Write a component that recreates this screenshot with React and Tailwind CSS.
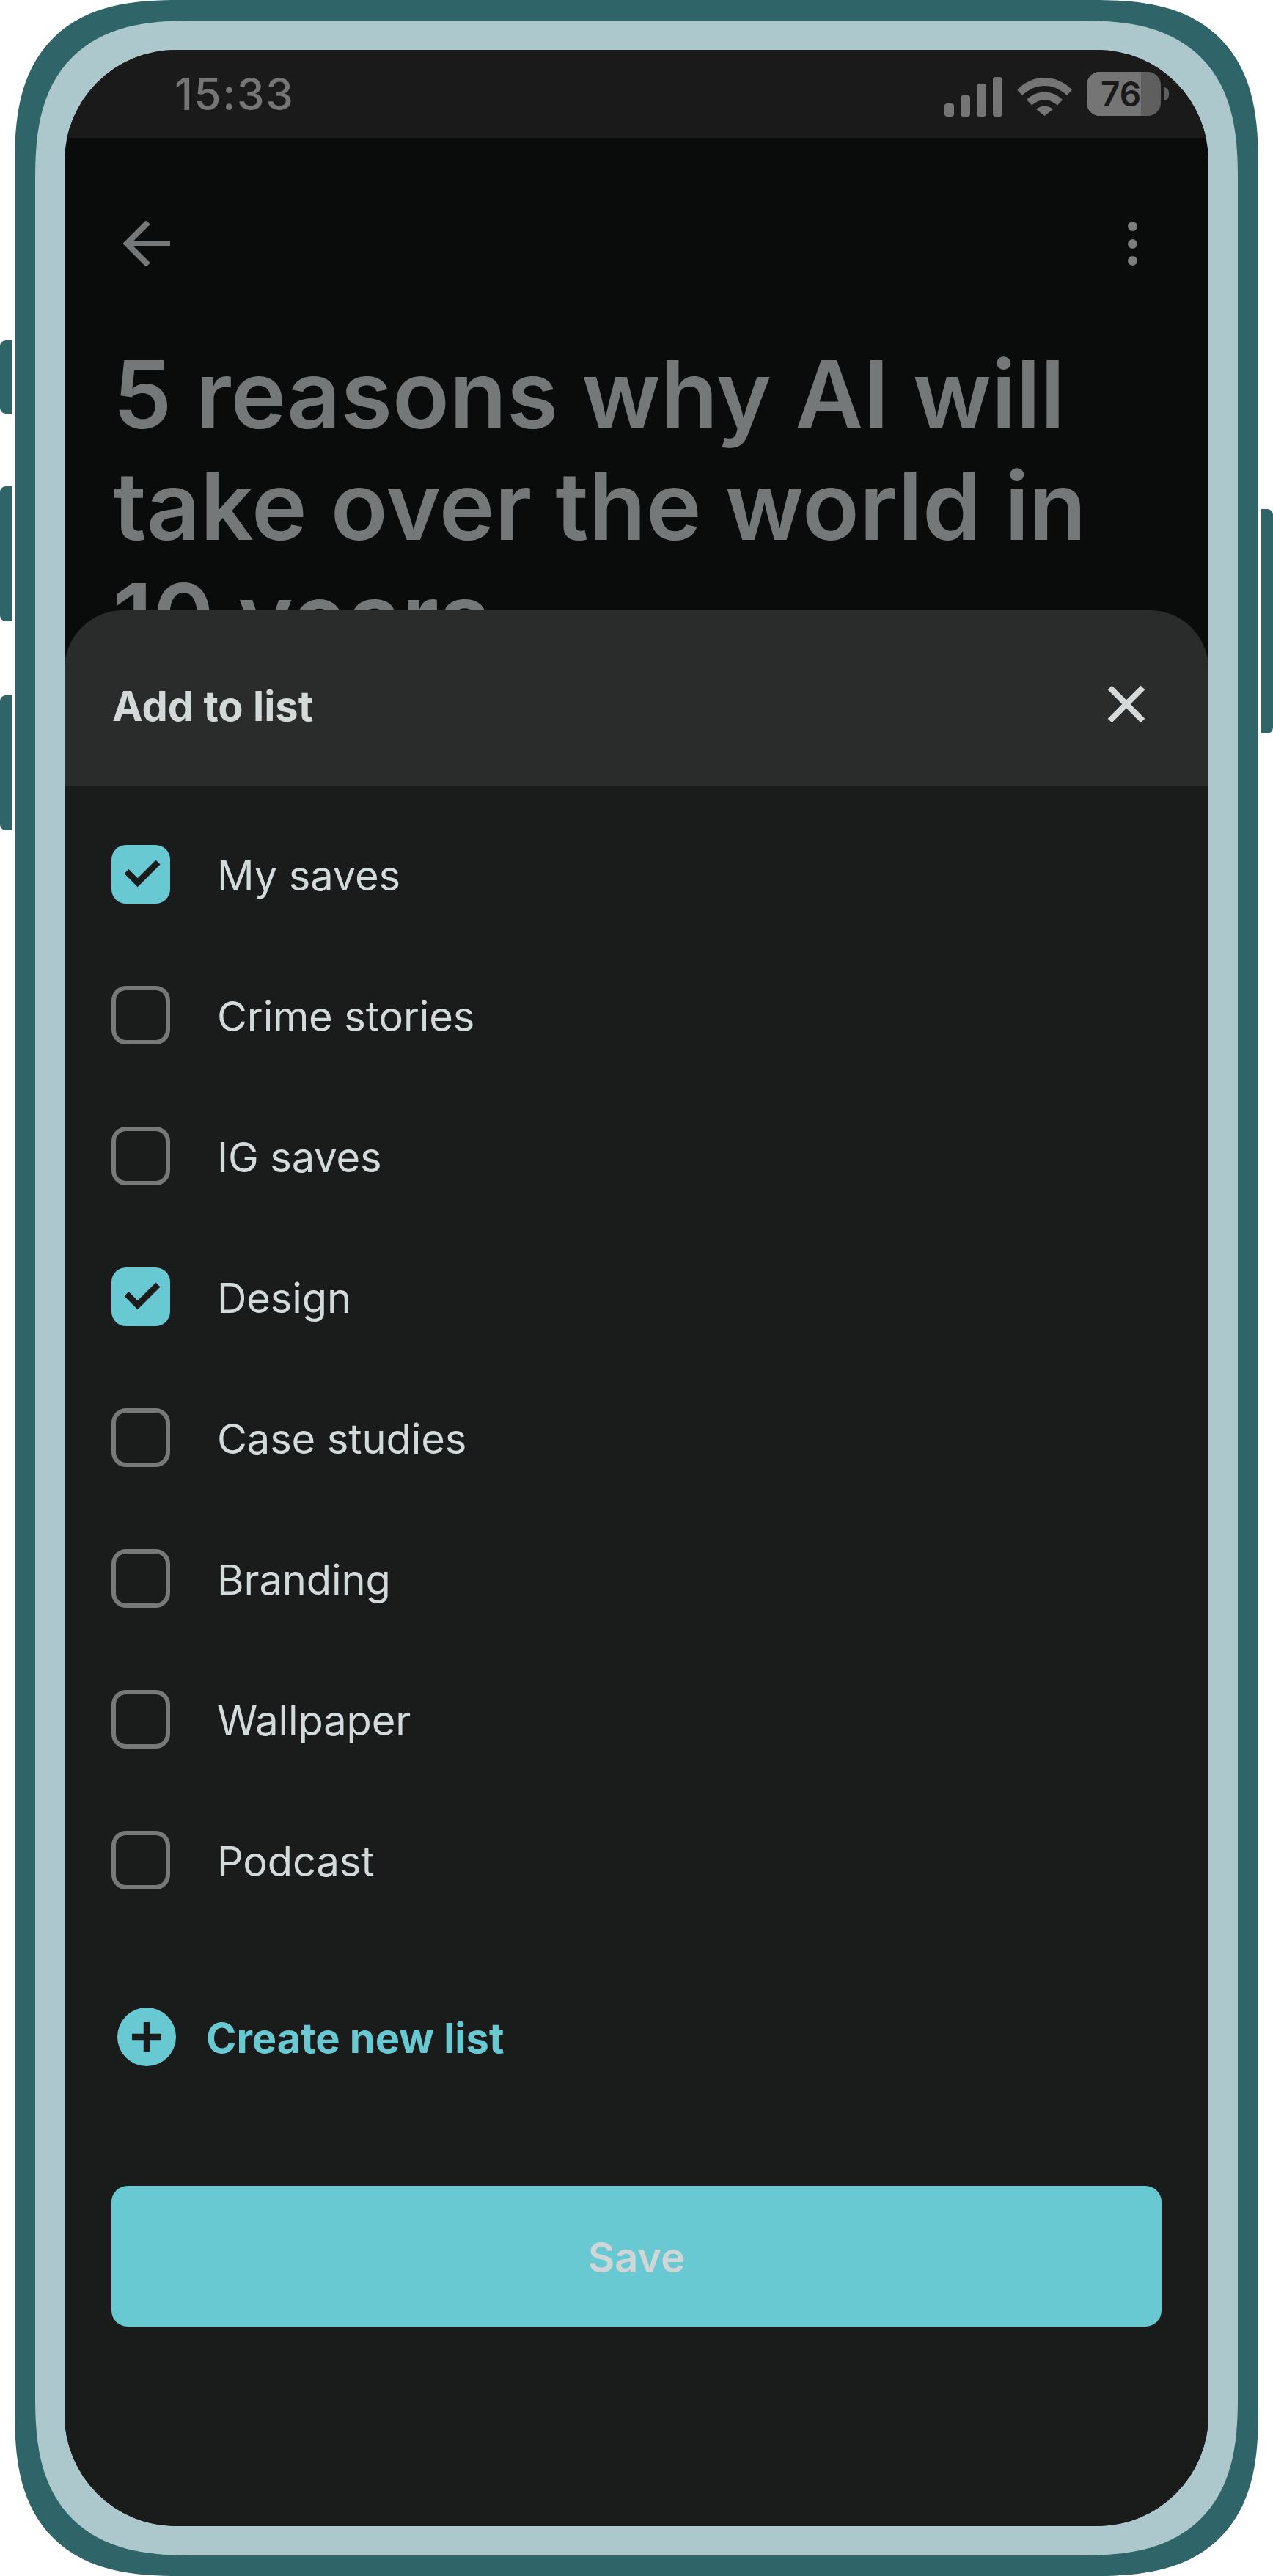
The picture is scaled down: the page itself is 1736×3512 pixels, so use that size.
const lists = [
  ["My saves", true],
  ["Crime stories", false],
  ["IG saves", false],
  ["Design", true],
  ["Case studies", false],
  ["Branding", false],
  ["Wallpaper", false],
  ["Podcast", false],
];

function Check({ label, checked }) {
  return (
    <div className="flex h-[192px] items-center gap-[64px]">
      {checked ? (
        <div className="h-[80px] w-[80px] shrink-0 rounded-[20px] bg-[#69c9d3]">
          <svg viewBox="0 0 80 80" className="h-[80px] w-[80px]" fill="none">
            <path d="M20.5 36 L35.7 51.3 L63.5 23.5" stroke="#1a1c1b" strokeWidth="8.5" />
          </svg>
        </div>
      ) : (
        <div className="h-[80px] w-[80px] shrink-0 rounded-[20px] border-[6px] border-[#757979]" />
      )}
      <span className="pt-[4px] text-[56px] leading-[80px] tracking-[-0.1px] text-[#d3dadc]">{label}</span>
    </div>
  );
}

function StatusIcons() {
  return (
    <div className="flex items-center">
      <svg width="80" height="54" viewBox="0 0 80 54" fill="#757575" className="mt-[7px]">
        <rect x="0" y="36" width="13" height="18" rx="4" />
        <rect x="22" y="25" width="13" height="29" rx="4" />
        <rect x="44" y="9" width="13" height="45" rx="4" />
        <rect x="66" y="0" width="13" height="54" rx="4" />
      </svg>
      <svg width="75" height="52" viewBox="0 0 75 52" fill="#757575" className="ml-[19px] mt-[7px]">
        <path d="M0 16.5 C21 -5.5 54 -5.5 75 16.5 L68 24 C50 6.5 25 6.5 7 24 Z" />
        <path d="M13 30 C27 16 48 16 62 30 L55 37.5 C43 27.5 32 27.5 20 37.5 Z" />
        <path d="M26 43 C33 37 42 37 49 43 L37.5 52 Z" />
      </svg>
      <div className="relative ml-[20px] flex h-[60px] w-[101px] items-center overflow-hidden rounded-[18px] bg-[#5f5f5f]">
        <div className="h-[60px] w-[74px] bg-[#757575]" />
        <span className="absolute left-[19px] top-0 text-[46px] font-semibold leading-[60px] text-[#1a1a1a]">76</span>
      </div>
      <div className="ml-[4px] h-[18px] w-[7px] rounded-r-[7px] bg-[#5f5f5f]" />
    </div>
  );
}

export default function App() {
  return (
    <div className="flex h-[3512px] w-[1736px] gap-[4px] overflow-hidden bg-white font-[Inter,sans-serif]">
      <div className="flex w-[16px] shrink-0 flex-col pt-[464px]">
        <div className="h-[100px] rounded-l-[8px] bg-[#2f6569]" />
        <div className="mt-[99px] h-[184px] rounded-l-[8px] bg-[#2f6569]" />
        <div className="mt-[101px] h-[184px] rounded-l-[8px] bg-[#2f6569]" />
      </div>

      <div className="h-[3512px] w-[1696px] shrink-0 rounded-[226px] bg-[#2f6569] p-[28px] [corner-shape:superellipse(1.4)]">
        <div className="h-full w-full rounded-[218px] bg-[#acc8cc] p-[40px] [corner-shape:superellipse(1.4)]">
          <div className="flex h-full w-full flex-col overflow-hidden rounded-[152px] bg-[#0a0c0b]">
            <div className="h-[764px] shrink-0 overflow-hidden">
              <div className="flex h-[120px] items-center justify-between bg-[#1a1a1a] pl-[150px] pr-[54px]">
                <span className="text-[60px] font-medium leading-[120px] tracking-[1.6px] text-[#757575]">15:33</span>
                <StatusIcons />
              </div>
              <div className="mt-[100px] flex h-[88px] items-center justify-between pl-[80px] pr-[97px]">
                <svg width="64" height="62" viewBox="0 0 64 62" fill="none" stroke="#747878" strokeWidth="8">
                  <path d="M64 31 H5 M34 2 L5 31 L34 60" />
                </svg>
                <div className="flex flex-col gap-[10.5px]">
                  <div className="h-[13px] w-[13px] rounded-full bg-[#7a7e7e]" />
                  <div className="h-[13px] w-[13px] rounded-full bg-[#7a7e7e]" />
                  <div className="h-[13px] w-[13px] rounded-full bg-[#7a7e7e]" />
                </div>
              </div>
              <h1 className="mt-[86px] pl-[66px] pr-[62px] text-[128px] font-semibold leading-[152px] tracking-[-0.1px] text-[#747878]">
                5 reasons why AI will take over the world in 10 years
              </h1>
            </div>

            <div className="flex min-h-0 flex-1 flex-col overflow-hidden rounded-t-[80px] bg-[#1a1c1b]">
              <div className="flex h-[240px] shrink-0 items-center justify-between bg-[#2a2c2b] pl-[65px] pr-[86px]">
                <span className="pt-[22px] text-[56px] font-bold leading-[80px] text-[#d3d8d8]">Add to list</span>
                <svg width="52" height="52" viewBox="0 0 52 52" fill="none" stroke="#d5d9da" strokeWidth="8" className="mt-[15px]">
                  <path d="M3.5 3.5 L48.5 48.5 M48.5 3.5 L3.5 48.5" />
                </svg>
              </div>
              <div className="flex flex-col px-[64px] pt-[24px]">
                {lists.map(([label, checked]) => (
                  <Check key={label} label={label} checked={checked} />
                ))}
                <div className="ml-[8px] mt-[105px] flex h-[80px] items-center gap-[41px]">
                  <div className="flex h-[80px] w-[80px] shrink-0 items-center justify-center rounded-full bg-[#69c9d3]">
                    <svg width="40" height="40" viewBox="0 0 40 40" stroke="#1a1c1b" strokeWidth="8.5">
                      <path d="M20 0 V40 M0 20 H40" />
                    </svg>
                  </div>
                  <span className="pt-[4px] text-[56px] font-bold leading-[80px] text-[#69c9d3]">Create new list</span>
                </div>
                <button className="mt-[163px] flex h-[192px] w-full items-center justify-center rounded-[22px] bg-[#69c9d3] pt-[4px] text-[56px] font-semibold text-[#d0d5d5]">
                  Save
                </button>
              </div>
            </div>
          </div>
        </div>
      </div>

      <div className="flex w-[16px] shrink-0 flex-col pt-[694px]">
        <div className="h-[306px] rounded-r-[8px] bg-[#2f6569]" />
      </div>
    </div>
  );
}
